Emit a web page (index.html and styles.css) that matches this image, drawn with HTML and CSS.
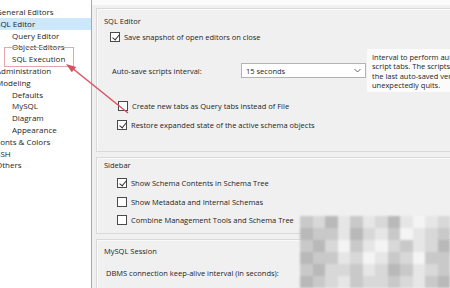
FILE: index.html
```html
<!DOCTYPE html>
<html>
<head>
<meta charset="utf-8">
<link rel="stylesheet" href="styles.css">
</head>
<body>
<div class="app">
  <div class="tree">
    <div class="item top">General Editors</div>
    <div class="item top sel">SQL Editor</div>
    <div class="item child">Query Editor</div>
    <div class="item child">Object Editors</div>
    <div class="item child">SQL Execution</div>
    <div class="item top">Administration</div>
    <div class="item top">Modeling</div>
    <div class="item child">Defaults</div>
    <div class="item child">MySQL</div>
    <div class="item child">Diagram</div>
    <div class="item child">Appearance</div>
    <div class="item top">Fonts &amp; Colors</div>
    <div class="item top">SSH</div>
    <div class="item top">Others</div>
  </div>
  <div class="main">
    <div class="strip"></div>
    <div class="group g1">
      <div class="title">SQL Editor</div>
      <label class="row r-save"><span class="cb on"></span>Save snapshot of open editors on close</label>
      <div class="row r-auto">
        <span class="lbl">Auto-save scripts interval:</span>
        <span class="select">15 seconds<svg class="chev" width="7" height="5" viewBox="0 0 7 5"><path d="M0.5 1 L3.5 4 L6.5 1" fill="none" stroke="#555" stroke-width="0.9"/></svg></span>
        <span class="desc">Interval to perform auto-saving of all open<br>script tabs. The scripts will be restored from<br>the last auto-saved version if Workbench<br>unexpectedly quits.</span>
      </div>
      <label class="row r-create"><span class="cb"></span>Create new tabs as Query tabs instead of File</label>
      <label class="row r-restore"><span class="cb on"></span>Restore expanded state of the active schema objects</label>
    </div>
    <div class="group g2">
      <div class="title">Sidebar</div>
      <label class="row r-side1"><span class="cb on"></span>Show Schema Contents in Schema Tree</label>
      <label class="row r-side"><span class="cb"></span>Show Metadata and Internal Schemas</label>
      <label class="row r-side"><span class="cb"></span>Combine Management Tools and Schema Tree</label>
    </div>
    <div class="group g3">
      <div class="title">MySQL Session</div>
      <div class="row r-dbms">DBMS connection keep-alive interval (in seconds):</div>
    </div>
  </div>
</div>
<div class="mosaic">
  <i class="s3"></i><i class="s4"></i><i class="s2"></i><i class="s5"></i><i class="s3"></i><i class="s5"></i><i class="s4"></i><i class="s2"></i><i class="s5"></i><i class="s6"></i><i class="s5"></i><i class="s4"></i>
  <i class="s2"></i><i class="s3"></i><i class="s3"></i><i class="s5"></i><i class="s2"></i><i class="s4"></i><i class="s5"></i><i class="s3"></i><i class="s6"></i><i class="s5"></i><i class="s4"></i><i class="s3"></i>
  <i class="s3"></i><i class="s2"></i><i class="s4"></i><i class="s6"></i><i class="s3"></i><i class="s5"></i><i class="s6"></i><i class="s4"></i><i class="s3"></i><i class="s5"></i><i class="s4"></i><i class="s2"></i>
  <i class="s2"></i><i class="s3"></i><i class="s3"></i><i class="s5"></i><i class="s4"></i><i class="s6"></i><i class="s5"></i><i class="s3"></i><i class="s4"></i><i class="s6"></i><i class="s3"></i><i class="s3"></i>
  <i class="s3"></i><i class="s2"></i><i class="s4"></i><i class="s4"></i><i class="s3"></i><i class="s5"></i><i class="s4"></i><i class="s2"></i><i class="s3"></i><i class="s5"></i><i class="s4"></i><i class="s3"></i>
  <i class="s2"></i><i class="s3"></i><i class="s4"></i><i class="s5"></i><i class="s3"></i><i class="s4"></i><i class="s4"></i><i class="s3"></i><i class="s4"></i><i class="s5"></i><i class="s3"></i><i class="s2"></i>
</div>
<svg class="annot" width="450" height="288" viewBox="0 0 450 288">
  <rect x="4.5" y="47.5" width="69" height="19" fill="none" stroke="#e9a3ad" stroke-width="1"/>
  <line x1="128" y1="113" x2="72" y2="68" stroke="#d9505f" stroke-width="1.4"/>
  <polygon points="66,64 76.2,66.9 71.8,72.3" fill="#d9505f"/>
</svg>
</body>
</html>
```
FILE: styles.css
```css
* { box-sizing: border-box; }
html, body { margin: 0; padding: 0; }
body {
  width: 450px;
  height: 288px;
  overflow: hidden;
  background: #f0f0f0;
  font-family: "Open Sans", "Liberation Sans", sans-serif;
  font-size: 7.5px;
  color: #1e1e1e;
  position: relative;
}
.app { display: flex; height: 288px; }
.tree {
  width: 92px;
  flex: none;
  background: #fff;
  border-right: 1px solid #a9a9a9;
  padding-top: 6px;
  overflow: hidden;
  font-size: 8px;
}
.item { height: 11.8px; line-height: 11.8px; white-space: nowrap; }
.item.top { padding-left: 0; margin-left: -4px; }
.item.child { padding-left: 12px; }
.item.sel { background: #cde8fa; margin-left: 0; padding-left: 0; text-indent: -4px; }
.main { flex: 1; padding-left: 4px; min-width: 0; }
.strip { height: 5px; background: #fbfbfb; margin-left: -4px; }
.group {
  border: 1px solid #d9d9d9;
  box-shadow: inset 1px 1px 0 #fafafa;
  margin-right: -20px;
  position: relative;
}
.g1 { margin-top: 3px; height: 144px; }
.g2 { margin-top: 5px; height: 77px; }
.g3 { margin-top: 5px; height: 60px; }
.title { height: 12px; line-height: 12px; padding-left: 7px; white-space: nowrap; }
.g1 .title { margin-top: 6px; }
.g2 .title { margin-top: 1px; }
.g3 .title { margin-top: 5px; }
.row { display: flex; align-items: center; height: 12px; white-space: nowrap; }
.cb {
  width: 10px; height: 10px; flex: none;
  border: 1px solid #4a4a4a;
  background: #fff;
  margin-right: 4px;
  position: relative;
}
.cb.on::after {
  content: "";
  position: absolute;
  left: 2.5px; top: 0px;
  width: 3px; height: 6px;
  border-right: 1.2px solid #333;
  border-bottom: 1.2px solid #333;
  transform: rotate(40deg);
}
.r-save { margin-top: 4px; padding-left: 13px; }
.r-auto { margin-top: 6px; height: 43px; padding-left: 15px; }
.lbl { width: 129px; flex: none; }
.select {
  width: 125px; height: 15px; flex: none;
  background: #fff;
  border: 1px solid #b3b3b3;
  display: flex; align-items: center; justify-content: space-between;
  padding: 0 4px 0 4px;
}
.desc {
  margin-left: 1px;
  height: 43px;
  background: #fbfbfb;
  padding: 4px 0 0 5px;
  line-height: 9.4px;
  white-space: nowrap;
}
.r-create { margin-top: 7.5px; padding-left: 21px; }
.r-restore { margin-top: 7.5px; padding-left: 20px; }
.r-side1 { margin-top: 6px; padding-left: 20px; }
.r-side { margin-top: 6.5px; padding-left: 20px; }
.r-dbms { margin-top: 10px; padding-left: 9px; }
.mosaic {
  position: absolute;
  left: 300px; top: 216px;
  width: 150px; height: 72px;
  display: grid;
  grid-template-columns: repeat(12, 12.5px);
  grid-template-rows: repeat(6, 12px);
  filter: blur(1px);
}
.mosaic i { display: block; }
.s2 { background: #b9b9b9; }
.s3 { background: #c9c9c9; }
.s4 { background: #d8d8d8; }
.s5 { background: #e6e6e6; }
.s6 { background: #f4f4f4; }
.annot { position: absolute; left: 0; top: 0; pointer-events: none; }
```
